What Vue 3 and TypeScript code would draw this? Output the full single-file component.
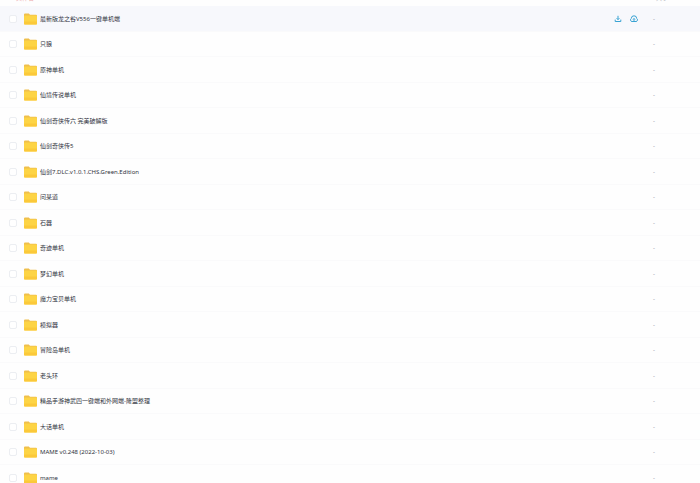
<script setup lang="ts">
import { ref } from 'vue'

interface FileRow {
  name: string
  size: string
}

const names: string[] = [
  '最新版龙之谷V556一键单机端',
  '只狼',
  '原神单机',
  '仙境传说单机',
  '仙剑奇侠传六 完美破解版',
  '仙剑奇侠传5',
  '仙剑7.DLC.v1.0.1.CHS.Green.Edition',
  '问某道',
  '石器',
  '奇迹单机',
  '梦幻单机',
  '魔力宝贝单机',
  '模拟器',
  '冒险岛单机',
  '老头环',
  '精品手游神武四一键端和外网端-隆盟整理',
  '大话单机',
  'MAME v0.248 (2022-10-03)',
  'mame',
]

const files: FileRow[] = names.map((name) => ({ name, size: '-' }))
const active = ref(0)
const selected = ref<string[]>([])
</script>

<template>
  <main class="files">
    <header class="heading">
      <span class="title">文件名</span>
      <span>大小</span>
    </header>
    <table class="list">
      <colgroup>
        <col class="col-check" />
        <col />
        <col class="col-actions" />
        <col class="col-size" />
      </colgroup>
      <tbody>
        <tr v-for="(file, i) in files" :key="file.name" :class="{ active: i === active }">
          <td class="check">
            <input :id="`file-${i}`" v-model="selected" type="checkbox" :value="file.name" />
          </td>
          <td>
            <label class="name" :for="`file-${i}`">
              <svg class="folder" viewBox="0 0 13 12" aria-hidden="true">
                <path d="M0 1.6Q0 .6 1 .6H4.8L6 1.8H12Q13 1.8 13 2.8V6H0Z" fill="#efbf4c" />
                <rect y="2.4" width="13" height="9.2" rx="0.8" fill="#fdd445" />
                <path d="M0 8.5H13V10.8Q13 11.6 12.2 11.6H0.8Q0 11.6 0 10.8Z" fill="#fbc93a" />
              </svg>
              <span>{{ file.name }}</span>
            </label>
          </td>
          <td>
            <div v-if="i === active" class="actions">
              <button type="button" aria-label="下载">
                <svg viewBox="0 0 8 8" aria-hidden="true">
                  <path d="M4 .8V4.6M2.6 3.2L4 4.6L5.4 3.2M1.2 4.6V6.5H6.8V4.6" />
                </svg>
              </button>
              <button type="button" aria-label="转存">
                <svg viewBox="0 0 8 8" aria-hidden="true">
                  <path d="M2 6.5A1.6 1.6 0 0 1 1.3 3.5A2.7 2.7 0 0 1 6.7 3.5A1.6 1.6 0 0 1 6 6.5ZM4 6V3.6M3 4.5L4 3.5L5 4.5" />
                </svg>
              </button>
            </div>
          </td>
          <td class="size">{{ file.size }}</td>
        </tr>
      </tbody>
    </table>
  </main>
</template>

<style>
body {
  background: #fefefe;
}
</style>

<style scoped>
.files {
  display: flex;
  flex-direction: column;
  height: 100vh;
  overflow: hidden;
  font: 6px/8px "Noto Sans", "Noto Sans CJK SC", sans-serif;
  color: #30333d;
}

.heading {
  box-sizing: border-box;
  display: flex;
  flex: none;
  align-items: flex-end;
  justify-content: space-between;
  height: 6px;
  padding: 0 32px 4px 16px;
  overflow: hidden;
  color: #b4b6bf;
}

.title {
  color: #eda9a9;
}

.list {
  width: 100%;
  table-layout: fixed;
  border-collapse: separate;
  border-spacing: 0;
}

.col-check {
  width: 24px;
}

.col-actions {
  width: 39px;
}

.col-size {
  width: 47px;
}

td {
  box-sizing: border-box;
  height: 25px;
  padding: 0;
  border-bottom: 1px solid #fafafb;
  vertical-align: middle;
}

tr:nth-child(odd) td {
  height: 26px;
}

.active td {
  background: #f7f8fc;
}

.check input {
  display: block;
  box-sizing: border-box;
  width: 8px;
  height: 8px;
  margin: 0 0 0 9px;
  appearance: none;
  border: 1px solid #eceef2;
  border-radius: 2px;
  background: #fff;
}

.check input:checked {
  background: #06a7ff;
}

.name {
  display: flex;
  align-items: center;
  gap: 3px;
  white-space: nowrap;
}

.folder {
  flex: none;
  width: 13px;
  height: 12px;
}

.actions {
  display: flex;
  gap: 8px;
}

button {
  width: 8px;
  height: 8px;
  padding: 0;
  border: 0;
  background: none;
}

button svg {
  display: block;
  width: 8px;
  height: 8px;
  fill: none;
  stroke: #38a3d3;
  stroke-width: 1;
}

.size {
  color: #8b8e98;
}
</style>
